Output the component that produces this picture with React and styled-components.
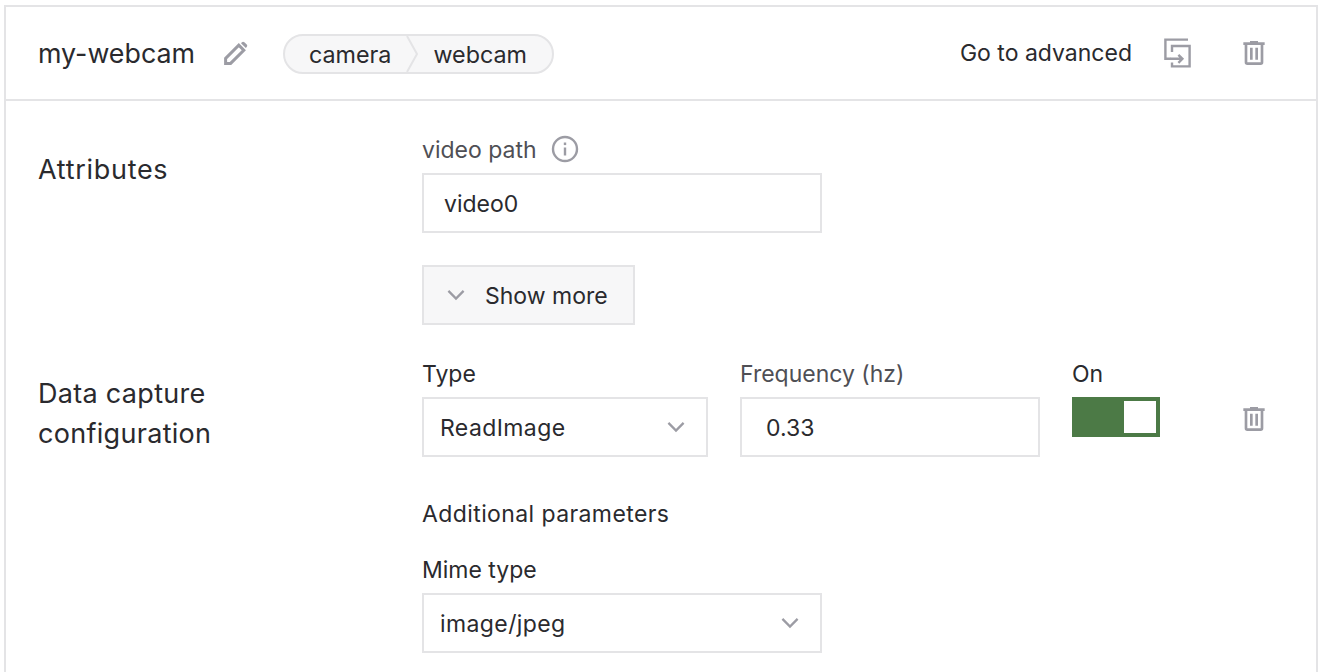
import styled, { createGlobalStyle } from 'styled-components'

const colors = {
    border: '#e4e4e6',
    icon: '#9c9ca4',
    text: '#2a2a2e',
    label: '#4f4f55',
    soft: '#f7f7f8',
    green: '#4c7a46',
}

const GlobalStyle = createGlobalStyle`
    html, body {
        margin: 0;
        height: 672px;
        overflow: hidden;
        background: #fff;
        font-family: "Inter", "Liberation Sans", sans-serif;
        color: ${colors.text};
    }
`

const Card = styled.div`
    box-sizing: border-box;
    width: 1314px;
    height: 667px;
    margin: 5px 0 0 4px;
    border: 2px solid ${colors.border};
    border-bottom: none;
`

const Header = styled.header`
    box-sizing: border-box;
    display: flex;
    align-items: center;
    height: 94px;
    padding: 0 46px 0 32px;
    border-bottom: 2px solid ${colors.border};
`

const Title = styled.h1`
    margin: 0;
    font-size: 26.8px;
    font-weight: 400;
`

const IconButton = styled.span`
    display: flex;
    margin-left: ${(props) => props.$left || 0}px;
    color: ${colors.icon};
`

const Model = styled.div`
    box-sizing: border-box;
    display: flex;
    align-items: center;
    height: 40px;
    margin: 2px 0 0 35px;
    padding: 0 25px 0 24px;
    border: 2px solid ${colors.border};
    border-radius: 20px;
    background: ${colors.soft};
    font-size: 23.3px;
`

const Chevron = styled.svg`
    width: 12px;
    height: 36px;
    margin: 0 15px;
    fill: none;
    stroke: ${colors.border};
    stroke-width: 2;
`

const Advanced = styled.span`
    margin-left: auto;
    font-size: 23px;
`

const Section = styled.section`
    display: grid;
    grid-template-columns: 384px 1fr;
    padding: 32px 0 0 32px;
`

const SectionTitle = styled.h2`
    margin: 17px 0 0;
    font-size: 27px;
    line-height: 40px;
    font-weight: 400;
    letter-spacing: ${(props) => props.$spacing || 0.3}px;
`

const Column = styled.div`
    display: flex;
    flex-direction: column;
    align-items: flex-start;
`

const Label = styled.label`
    display: flex;
    align-items: center;
    gap: 14px;
    height: 40px;
    padding-bottom: 6px;
    box-sizing: border-box;
    font-size: 23px;
    color: ${(props) => props.$muted ? colors.label : colors.text};

    svg {
        margin-bottom: 2px;
    }
`

const Box = styled.div`
    box-sizing: border-box;
    display: flex;
    align-items: center;
    justify-content: space-between;
    width: ${(props) => props.$width}px;
    height: 60px;
    padding: 2px 20px 0 ${(props) => props.$left}px;
    border: 2px solid ${colors.border};
    font-size: 23px;
`

const SelectBox = styled(Box)`
    padding-right: 16px;
    letter-spacing: 0.4px;

    svg {
        margin-top: -2px;
    }
`

const ShowMore = styled.button`
    box-sizing: border-box;
    display: flex;
    align-items: center;
    gap: 15px;
    width: 213px;
    height: 60px;
    margin-top: 32px;
    padding: 2px 0 0 18px;
    border: 2px solid ${colors.border};
    background: ${colors.soft};
    color: ${colors.text};
    font: inherit;
    font-size: 23px;

    svg {
        margin-top: -2px;
    }
`

const CaptureRow = styled.div`
    display: flex;
    gap: 32px;
`

const Toggle = styled.div`
    box-sizing: border-box;
    display: flex;
    justify-content: flex-end;
    width: 88px;
    height: 40px;
    padding: 4px;
    background: ${colors.green};
`

const Thumb = styled.span`
    width: 32px;
    height: 32px;
    background: #fff;
`

const TrashSlot = styled.div`
    display: flex;
    align-self: flex-start;
    margin: 46px 0 0 46px;
    color: ${colors.icon};
`

const SubHeading = styled.div`
    margin: 37px 0 19px;
    line-height: 40px;
    font-size: 23px;
    letter-spacing: 0.4px;
`

function Icon({ path, size = 24 }) {
    return (
        <svg width={size} height={size} viewBox="0 0 24 24" fill="currentColor">
            <path d={path} />
        </svg>
    )
}

function ChevronDown({ size = 28 }) {
    return (
        <svg width={size} height={size} viewBox="0 0 24 24" fill="none" stroke={colors.icon} strokeWidth="2">
            <path d="M5.5 8.5L12 15l6.5-6.5" />
        </svg>
    )
}

function InfoIcon() {
    return (
        <svg width="28" height="28" viewBox="0 0 28 28" fill="none" stroke={colors.icon} strokeWidth="2.4">
            <circle cx="14" cy="14" r="12" />
            <path d="M14 12.5v8" />
            <path d="M14 7.5v2.6" />
        </svg>
    )
}

function PencilIcon() {
    return (
        <svg width="24" height="24" viewBox="0 0 24 24">
            <path d="M1.6 22.4v-5L14.8 4.2l5 5L6.6 22.4z" fill="none" stroke="currentColor" strokeWidth="3" />
            <path d="M17 2.2l.9-.9a1.8 1.8 0 0 1 2.5 0l2.3 2.3a1.8 1.8 0 0 1 0 2.5l-.9.9z" fill="currentColor" />
        </svg>
    )
}

function CopyIcon() {
    return (
        <svg width="27" height="30" viewBox="0 0 27 30" fill="none" stroke="currentColor" strokeWidth="2.4">
            <path d="M24 1.6H1.4v19.2h5" />
            <path d="M8 14V8h17.6v20.4H8v-4" />
            <path d="M6 20.8h12M14.4 16.8l4 4-4 4" />
        </svg>
    )
}

const TRASH = 'M9,3V4H4V6H5V19A2,2 0 0,0 7,21H17A2,2 0 0,0 19,19V6H20V4H15V3H9M7,6H17V19H7V6M9,8V17H11V8H9M13,8V17H15V8H13Z'

function App() {
    return (
        <>
            <GlobalStyle />
            <Card>
                <Header>
                    <Title>my-webcam</Title>
                    <IconButton $left={29}><PencilIcon /></IconButton>
                    <Model>
                        <span>camera</span>
                        <Chevron viewBox="0 0 12 36"><path d="M1 0l10 18L1 36" /></Chevron>
                        <span>webcam</span>
                    </Model>
                    <Advanced>Go to advanced</Advanced>
                    <IconButton $left={32}><CopyIcon /></IconButton>
                    <IconButton $left={47}><Icon path={TRASH} size={32} /></IconButton>
                </Header>

                <Section>
                    <SectionTitle $spacing={0.7}>Attributes</SectionTitle>
                    <Column>
                        <Label $muted>video path <InfoIcon /></Label>
                        <Box $width={400} $left={20}>video0</Box>
                        <ShowMore><ChevronDown />Show more</ShowMore>
                    </Column>
                </Section>

                <Section>
                    <SectionTitle>Data capture<br />configuration</SectionTitle>
                    <Column>
                        <CaptureRow>
                            <Column>
                                <Label>Type</Label>
                                <SelectBox $width={286} $left={16}>ReadImage<ChevronDown /></SelectBox>
                            </Column>
                            <Column>
                                <Label $muted>Frequency (hz)</Label>
                                <Box $width={300} $left={24}>0.33</Box>
                            </Column>
                            <Column>
                                <Label>On</Label>
                                <Toggle><Thumb /></Toggle>
                            </Column>
                            <TrashSlot><Icon path={TRASH} size={32} /></TrashSlot>
                        </CaptureRow>
                        <SubHeading>Additional parameters</SubHeading>
                        <Label>Mime type</Label>
                        <SelectBox $width={400} $left={16}>image/jpeg<ChevronDown /></SelectBox>
                    </Column>
                </Section>
            </Card>
        </>
    )
}

export default App
